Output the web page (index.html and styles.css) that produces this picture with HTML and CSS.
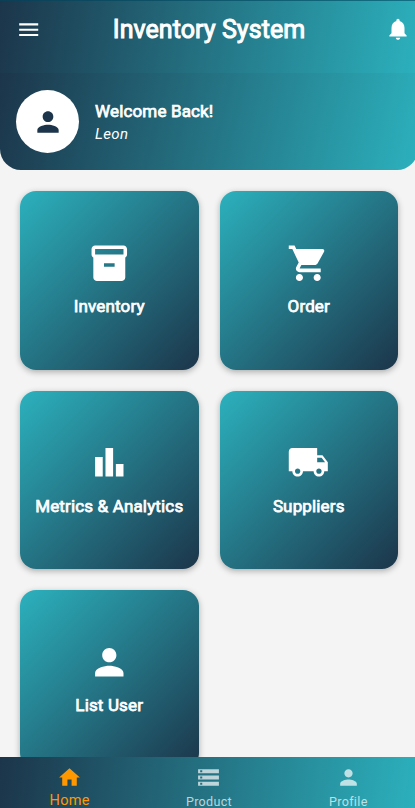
FILE: index.html
```html
<!DOCTYPE html>
<html lang="en">
<head>
<meta charset="utf-8">
<title>Inventory System</title>
<link rel="stylesheet" href="styles.css">
</head>
<body>
<div class="app">
  <header class="appbar">
    <svg class="icon icon-menu" viewBox="0 0 24 24"><path d="M3 18h18v-2H3v2zm0-5h18v-2H3v2zm0-7v2h18V6H3z"/></svg>
    <h1 class="title">Inventory System</h1>
    <svg class="icon icon-bell" viewBox="0 0 24 24"><path d="M12 22c1.100 0 2-.9 2-2h-4c0 1.100.89 2 2 2zm6-6v-5c0-3.070-1.640-5.640-4.500-6.320V4c0-.83-.67-1.500-1.500-1.500s-1.500.67-1.500 1.500v.68C7.630 5.360 6 7.920 6 11v5l-2 2v1h16v-1l-2-2z"/></svg>
  </header>
  <section class="welcome">
    <div class="avatar"><svg class="icon" viewBox="0 0 24 24"><path d="M12 12c2.210 0 4-1.790 4-4s-1.790-4-4-4-4 1.790-4 4 1.790 4 4 4zm0 2c-2.670 0-8 1.340-8 4v2h16v-2c0-2.660-5.330-4-8-4z"/></svg></div>
    <div class="who">
      <p class="greeting">Welcome Back!</p>
      <p class="name">Leon</p>
    </div>
  </section>
  <main class="grid">
    <a class="card"><svg class="icon" viewBox="0 0 24 24"><path d="M20 2H4c-1 0-2 .9-2 2v3.010c0 .72.43 1.340 1 1.690V20c0 1.100 1.100 2 2 2h14c.9 0 2-.9 2-2V8.700c.57-.35 1-.97 1-1.690V4c0-1.100-1-2-2-2zm-5 12H9v-2h6v2zm5-7H4V4h16v3z"/></svg><span class="label">Inventory</span></a>
    <a class="card"><svg class="icon" viewBox="0 0 24 24"><path d="M7 18c-1.100 0-1.990.9-1.990 2S5.900 22 7 22s2-.9 2-2-.9-2-2-2zM1 2v2h2l3.600 7.590-1.350 2.450c-.16.28-.25.61-.25.96 0 1.100.9 2 2 2h12v-2H7.420c-.14 0-.25-.11-.25-.25l.03-.12.9-1.630h7.450c.75 0 1.410-.41 1.750-1.030l3.580-6.490c.08-.14.12-.31.12-.48 0-.55-.45-1-1-1H5.210l-.94-2H1zm16 16c-1.100 0-1.990.9-1.990 2s.89 2 1.990 2 2-.9 2-2-.9-2-2-2z"/></svg><span class="label">Order</span></a>
    <a class="card"><svg class="icon" viewBox="0 0 24 24"><path d="M4 9h4.300v11H4zm11.700 4H20v7h-4.300zM9.850 4h4.300v16h-4.300z"/></svg><span class="label">Metrics &amp; Analytics</span></a>
    <a class="card"><svg class="icon" viewBox="0 0 24 24"><path d="M20 8h-3V4H3c-1.100 0-2 .9-2 2v11h2c0 1.660 1.340 3 3 3s3-1.340 3-3h6c0 1.660 1.340 3 3 3s3-1.340 3-3h2v-5l-3-4zM6 18.500c-.83 0-1.500-.67-1.500-1.500s.67-1.500 1.500-1.500 1.500.67 1.500 1.500-.67 1.500-1.500 1.500zm13.500-9l1.960 2.500H17V9.500h2.500zm-1.500 9c-.83 0-1.500-.67-1.500-1.500s.67-1.500 1.500-1.500 1.500.67 1.500 1.500-.67 1.500-1.500 1.500z"/></svg><span class="label">Suppliers</span></a>
    <a class="card"><svg class="icon" viewBox="0 0 24 24"><path d="M12 12c2.210 0 4-1.790 4-4s-1.790-4-4-4-4 1.790-4 4 1.790 4 4 4zm0 2c-2.670 0-8 1.340-8 4v2h16v-2c0-2.660-5.330-4-8-4z"/></svg><span class="label">List User</span></a>
  </main>
  <nav class="tabs">
    <a class="tab active"><svg class="icon" viewBox="0 0 24 24"><path d="M10 20v-6h4v6h5v-8h3L12 3 2 12h3v8z"/></svg><span>Home</span></a>
    <a class="tab"><svg class="icon" viewBox="0 0 24 24"><path d="M2 20h20v-4H2v4zm2-3h2v2H4v-2zM2 4v4h20V4H2zm4 3H4V5h2v2zm-4 7h20v-4H2v4zm2-3h2v2H4v-2z"/></svg><span>Product</span></a>
    <a class="tab"><svg class="icon" viewBox="0 0 24 24"><path d="M12 12c2.210 0 4-1.790 4-4s-1.790-4-4-4-4 1.790-4 4 1.790 4 4 4zm0 2c-2.670 0-8 1.340-8 4v2h16v-2c0-2.660-5.330-4-8-4z"/></svg><span>Profile</span></a>
  </nav>
</div>
</body>
</html>
```
FILE: styles.css
```css
:root {
  --navy: #1c354a;
  --teal: #2cb1bd;
}
* { box-sizing: border-box; }
html { overflow: hidden; }
body, h1, p { margin: 0; }
body {
  font-family: Roboto, sans-serif;
  color: #fff;
  background: #f4f4f4;
}
.icon { display: block; flex: none; fill: currentColor; }
.app {
  display: flex;
  flex-direction: column;
  width: 418px;
  height: 808px;
  overflow: hidden;
}
.appbar {
  flex: none;
  display: grid;
  grid-template-columns: 26px 1fr 26px;
  align-items: center;
  height: 73px;
  padding: 0 7px 14px 16px;
  background: linear-gradient(100deg, var(--navy), var(--teal));
  box-shadow: inset 0 1px rgba(0, 70, 95, .6);
}
.icon-menu { width: 25.400px; height: 25.400px; }
.icon-bell { width: 26px; height: 26px; margin-bottom: 1px; }
.title {
  padding-right: 9px;
  text-align: center;
  font-size: 25px;
  line-height: 30px;
  font-weight: 400;
  letter-spacing: .06px;
  -webkit-text-stroke: 1px #fff;
}
.welcome {
  flex: none;
  display: flex;
  align-items: center;
  gap: 16px;
  height: 97px;
  padding: 0 16px;
  border-radius: 0 0 21px 21px;
  background: linear-gradient(103deg, var(--navy), var(--teal));
}
.avatar {
  display: grid;
  place-items: center;
  width: 63px;
  height: 63px;
  border-radius: 50%;
  background: #fff;
  color: var(--navy);
}
.avatar .icon { width: 32px; height: 32px; }
.who { padding-top: 3px; }
.greeting, .label {
  font-size: 17px;
  line-height: 22px;
  font-weight: 400;
  letter-spacing: .15px;
  -webkit-text-stroke: .75px #fff;
}
.name { font-size: 15px; line-height: 24px; font-style: italic; letter-spacing: .4px; }
.grid {
  flex: 1;
  min-height: 0;
  display: grid;
  grid-template-columns: repeat(2, 178.500px);
  grid-auto-rows: 178.500px;
  gap: 21px;
  padding: 21px 0 0 20px;
  overflow: hidden;
}
.card {
  display: flex;
  flex-direction: column;
  align-items: center;
  justify-content: center;
  gap: 11px;
  padding-bottom: 1.500px;
  border-radius: 16px;
  background: linear-gradient(135deg, var(--teal), var(--navy));
  box-shadow: 0 2px 6px rgba(0, 0, 0, .3);
}
.card .icon { width: 42.600px; height: 42.600px; }
.tabs {
  flex: none;
  display: grid;
  grid-template-columns: repeat(3, 1fr);
  height: 51px;
  padding-top: 8px;
  background: linear-gradient(97deg, var(--navy), var(--teal));
}
.tab {
  display: flex;
  flex-direction: column;
  align-items: center;
  font-size: 12.500px;
  line-height: 20px;
  letter-spacing: .35px;
  color: rgba(255, 255, 255, .7);
}
.tab .icon { width: 25px; height: 25px; margin-bottom: 2px; }
.tab.active { color: #ff9800; font-size: 14.500px; line-height: 18px; }
```
